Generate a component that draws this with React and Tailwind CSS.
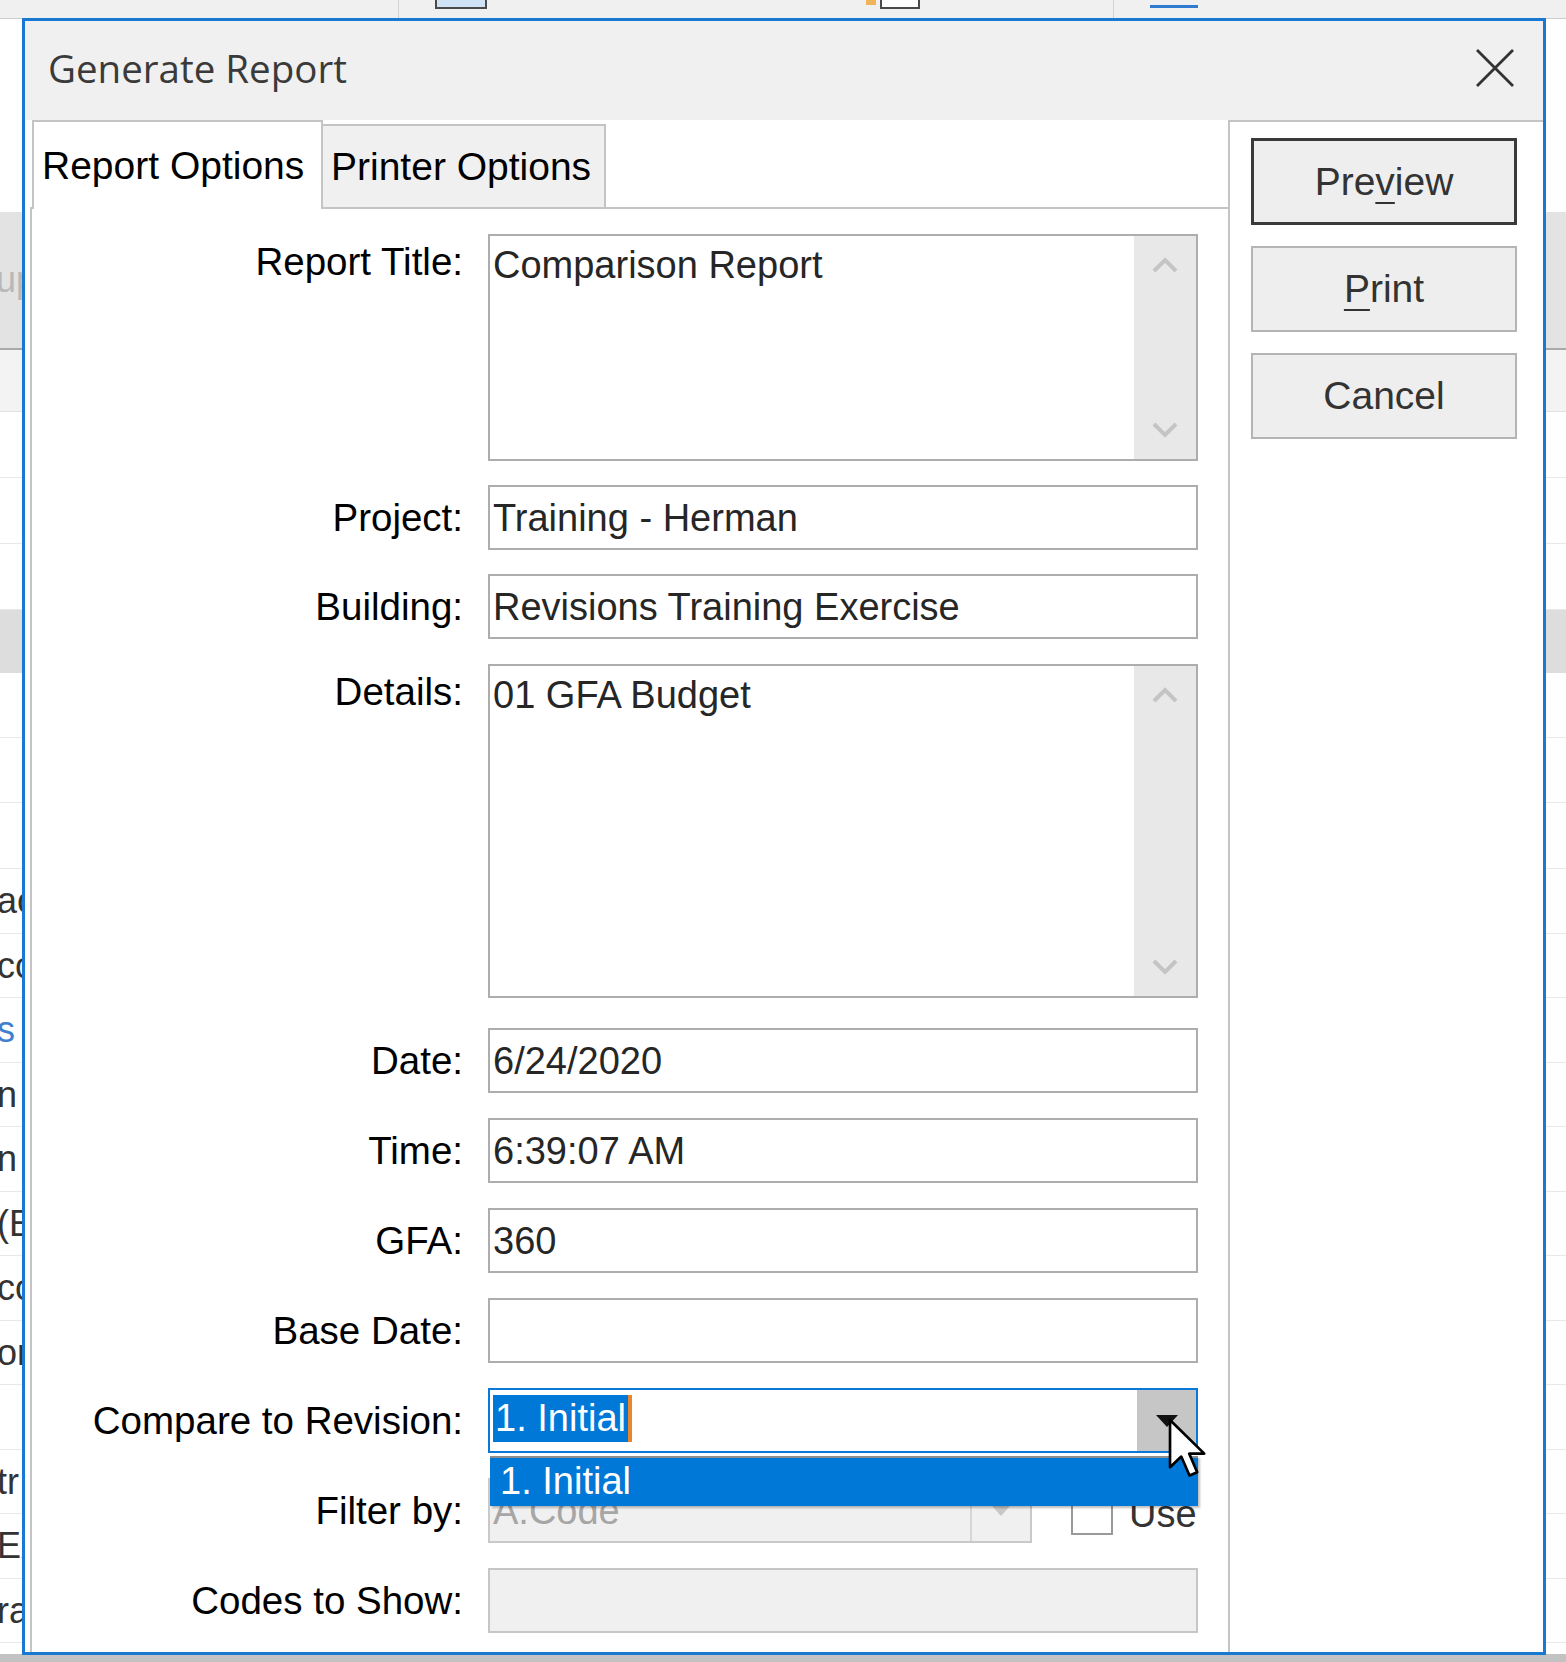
import React from "react";

// background app rows peeking out at the left/right edges of the dialog
const sideRows = [
  { t: "ac" },
  { t: "co" },
  { t: "s (", blue: true },
  { t: "n" },
  { t: "n" },
  { t: "(E" },
  { t: "co" },
  { t: "or" },
  { t: "" },
  { t: "tr" },
  { t: "Ex" },
  { t: "ra" },
];

function Background() {
  return (
    <div className="flex h-full flex-col">
      <div className="relative h-[19px] shrink-0 border-b border-[#cdcdcd] bg-[#f0f0f0]">
        <div className="absolute left-[398px] top-0 h-full w-px bg-[#d2d2d2]" />
        <div className="absolute left-[1113px] top-0 h-full w-px bg-[#d2d2d2]" />
        <div className="absolute left-[435px] top-0 h-[9px] w-[52px] border-x-2 border-b-2 border-[#4a4a4a] bg-[#cfe2f6]" />
        <div className="absolute left-[866px] top-0 h-[5px] w-[10px] bg-[#f0b45a]" />
        <div className="absolute left-[880px] top-0 h-[9px] w-[40px] border-x-2 border-b-2 border-[#4a4a4a] bg-white" />
        <div className="absolute left-[1150px] top-0 h-[8px] w-[48px] border-b-[3px] border-[#2f7bd0]" />
      </div>
      <div className="h-[193px] shrink-0 bg-white" />
      <div className="h-[138px] shrink-0 overflow-hidden border-b-2 border-[#a9a9a9] bg-[#e3e3e3] text-[36px] leading-[136px] text-[#b8b8b8]">
        <span className="-ml-[4px] inline-block">up</span>
      </div>
      <div className="h-[62px] shrink-0 border-b border-[#e2e2e2] bg-[#f3f3f3]" />
      <div className="h-[66px] shrink-0 border-b border-[#e8e8e8]" />
      <div className="h-[66px] shrink-0 border-b border-[#e8e8e8]" />
      <div className="h-[66px] shrink-0 border-b border-[#e8e8e8]" />
      <div className="h-[63px] shrink-0 bg-[#dddddd]" />
      <div className="h-[65px] shrink-0 border-b border-[#e8e8e8]" />
      <div className="h-[65px] shrink-0 border-b border-[#e8e8e8]" />
      <div className="h-[66px] shrink-0 border-b border-[#e8e8e8]" />
      {sideRows.map((r, i) => (
        <div
          key={i}
          className="h-[64.5px] shrink-0 overflow-hidden border-b border-[#e8e8e8] text-[36px] leading-[64px] text-[#333]"
        >
          {r.blue ? (
            <span className="-ml-[3px] inline-block text-[#3f7fcf]">
              s <span className="text-[#e59a3c]">(</span>
            </span>
          ) : (
            <span className="-ml-[3px] inline-block">{r.t}</span>
          )}
        </div>
      ))}
      <div className="min-h-0 flex-1" />
      <div className="h-[8px] shrink-0 bg-[#c2c2c2]" />
    </div>
  );
}

const Chevron = ({ up }) => (
  <svg width="28" height="18" viewBox="0 0 28 18">
    <path
      d={up ? "M3 15 L14 4 L25 15" : "M3 3 L14 14 L25 3"}
      fill="none"
      stroke="#c4c4c4"
      strokeWidth="4"
    />
  </svg>
);

function Label({ children, top }) {
  return (
    <div
      className={`w-[431px] shrink-0 text-right text-[38.5px] leading-[44px] text-black ${
        top ? "self-start pt-[6px]" : ""
      }`}
    >
      {children}
    </div>
  );
}

function TextBox({ value, gray }) {
  return (
    <div
      className={`ml-[25px] flex h-[65px] w-[710px] items-center border-2 px-[3px] text-[38px] leading-[44px] text-[#262626] ${
        gray ? "border-[#c6c6c6] bg-[#f0f0f0]" : "border-[#adadad] bg-white"
      }`}
    >
      {value}
    </div>
  );
}

function TextArea({ value, tall }) {
  return (
    <div
      className={`ml-[25px] flex w-[710px] border-2 border-[#adadad] bg-white ${
        tall ? "h-[334px]" : "h-[227px]"
      }`}
    >
      <div className="flex-1 px-[3px] pt-[7px] text-[38px] leading-[44px] text-[#262626]">
        {value}
      </div>
      <div className="flex w-[62px] flex-col items-center justify-between bg-[#e8e8e8] py-[20px]">
        <Chevron up />
        <Chevron />
      </div>
    </div>
  );
}

function Row({ label, children, top }) {
  return (
    <div className="flex items-center">
      <Label top={top}>{label}</Label>
      {children}
    </div>
  );
}

function CompareCombo() {
  return (
    <div className="relative ml-[25px] flex h-[65px] w-[710px] border-2 border-[#0a78d6] bg-white">
      <div className="flex flex-1 items-start pl-[3px] pt-[5px]">
        <span className="bg-[#0078d7] px-[2px] text-[38px] leading-[47px] text-white">
          1. Initial
        </span>
        <span className="h-[47px] w-[4px] bg-[#e8862e]" />
      </div>
      <div className="flex w-[59px] items-center justify-center bg-[#c6c6c6]">
        <svg width="22" height="12" viewBox="0 0 22 12">
          <path d="M0 0 L22 0 L11 12 Z" fill="#111" />
        </svg>
      </div>
      {/* open dropdown list */}
      <div className="absolute left-0 right-[-2px] top-[66px] z-20 h-[50px] border-t-2 border-[#8e8e8e] bg-[#0078d7] pl-[10px] text-[38px] leading-[46px] text-white shadow-[2px_2px_2px_rgba(0,0,0,0.25)]">
        1. Initial
      </div>
      {/* mouse pointer */}
      <svg
        className="absolute left-[677px] top-[27px] z-30"
        width="40"
        height="62"
        viewBox="0 0 13.5 21"
      >
        <path
          d="M1 1 L1 17 L4.8 13.4 L7.6 19.8 L10.2 18.7 L7.5 12.4 L12.6 12.4 Z"
          fill="#fff"
          stroke="#000"
          strokeWidth="0.9"
          strokeLinejoin="round"
        />
      </svg>
    </div>
  );
}

function FilterRow() {
  return (
    <div className="ml-[25px] flex w-[710px] items-center">
      <div className="flex h-[65px] w-[544px] border-2 border-[#c9c9c9] bg-[#f0f0f0]">
        <div className="flex flex-1 items-center px-[3px] text-[38px] leading-[44px] text-[#a6a6a6]">
          A.Code
        </div>
        <div className="flex w-[60px] items-center justify-center border-l-2 border-[#d6d6d6]">
          <svg width="18" height="10" viewBox="0 0 18 10">
            <path d="M0 0 L18 0 L9 10 Z" fill="#c8c8c8" />
          </svg>
        </div>
      </div>
      <div className="ml-[39px] mt-[6px] h-[42px] w-[42px] border-2 border-[#9a9a9a] bg-white" />
      <span className="ml-[16px] mt-[6px] text-[38px] leading-[44px] text-[#333]">Use</span>
    </div>
  );
}

function Tabs() {
  return (
    <div className="flex h-[87px] shrink-0 items-start">
      <div className="relative z-10 ml-[2px] flex h-[89px] w-[291px] items-center border-x-2 border-t-2 border-[#c4c4c4] bg-white pl-[8px] text-[39px] leading-[44px] text-black">
        Report Options
      </div>
      <div className="mt-[4px] flex h-[83px] w-[283px] items-center border-r-2 border-t-2 border-[#c4c4c4] bg-[#f0f0f0] pl-[8px] text-[39px] leading-[44px] text-black">
        Printer Options
      </div>
    </div>
  );
}

function Panel() {
  return (
    <div className="min-h-0 flex-1 border-l-2 border-t-2 border-[#c4c4c4] bg-white pt-[25px]">
      <div className="flex flex-col gap-[24px]">
        <Row label="Report Title:" top>
          <TextArea value="Comparison Report" />
        </Row>
        <Row label="Project:">
          <TextBox value="Training - Herman" />
        </Row>
        <Row label="Building:">
          <TextBox value="Revisions Training Exercise" />
        </Row>
      </div>
      <div className="mt-[25px]">
        <Row label="Details:" top>
          <TextArea value="01 GFA Budget" tall />
        </Row>
      </div>
      <div className="mt-[30px] flex flex-col gap-[25px]">
        <Row label="Date:">
          <TextBox value="6/24/2020" />
        </Row>
        <Row label="Time:">
          <TextBox value="6:39:07 AM" />
        </Row>
        <Row label="GFA:">
          <TextBox value="360" />
        </Row>
        <Row label="Base Date:">
          <TextBox value="" />
        </Row>
        <Row label="Compare to Revision:">
          <CompareCombo />
        </Row>
        <Row label="Filter by:">
          <FilterRow />
        </Row>
        <Row label="Codes to Show:">
          <TextBox value="" gray />
        </Row>
      </div>
    </div>
  );
}

function DlgButton({ children, primary }) {
  return (
    <button
      className={`flex w-[266px] items-center justify-center bg-[#eeeeee] text-[39px] leading-[44px] text-[#333] ${
        primary ? "h-[87px] border-[3px] border-[#3a3a3a]" : "h-[86px] border-2 border-[#b4b4b4]"
      }`}
    >
      {children}
    </button>
  );
}

function Dialog() {
  return (
    <div className="absolute left-[22px] top-[18px] flex h-[1637px] w-[1524px] flex-col border-[3px] border-[#1979d2] bg-white">
      <div className="flex h-[99px] shrink-0 items-center justify-between bg-[#f0f0f0] pb-[6px] pl-[23px] pr-[29px]">
        <span className="font-['Open_Sans',sans-serif] text-[38.5px] leading-[44px] text-[#3a3a3a]">
          Generate Report
        </span>
        <svg width="38" height="38" viewBox="0 0 38 38">
          <path d="M1 1 L37 37 M37 1 L1 37" stroke="#333" strokeWidth="2.8" />
        </svg>
      </div>
      <div className="flex min-h-0 flex-1">
        <div className="flex w-[1203px] shrink-0 flex-col pl-[5px]">
          <Tabs />
          <Panel />
        </div>
        <div className="flex flex-1 flex-col gap-[21px] border-l-2 border-t-2 border-[#c4c4c4] bg-white pl-[21px] pt-[16px]">
          <DlgButton primary>
            <span>
              Pre<span className="underline decoration-2 underline-offset-[7px]">v</span>iew
            </span>
          </DlgButton>
          <DlgButton>
            <span>
              <span className="underline decoration-2 underline-offset-[7px]">P</span>rint
            </span>
          </DlgButton>
          <DlgButton>Cancel</DlgButton>
        </div>
      </div>
    </div>
  );
}

export default function App() {
  return (
    <div className="relative h-[1662px] w-[1566px] overflow-hidden bg-white font-['Liberation_Sans',Arial,sans-serif]">
      <Background />
      <Dialog />
    </div>
  );
}
